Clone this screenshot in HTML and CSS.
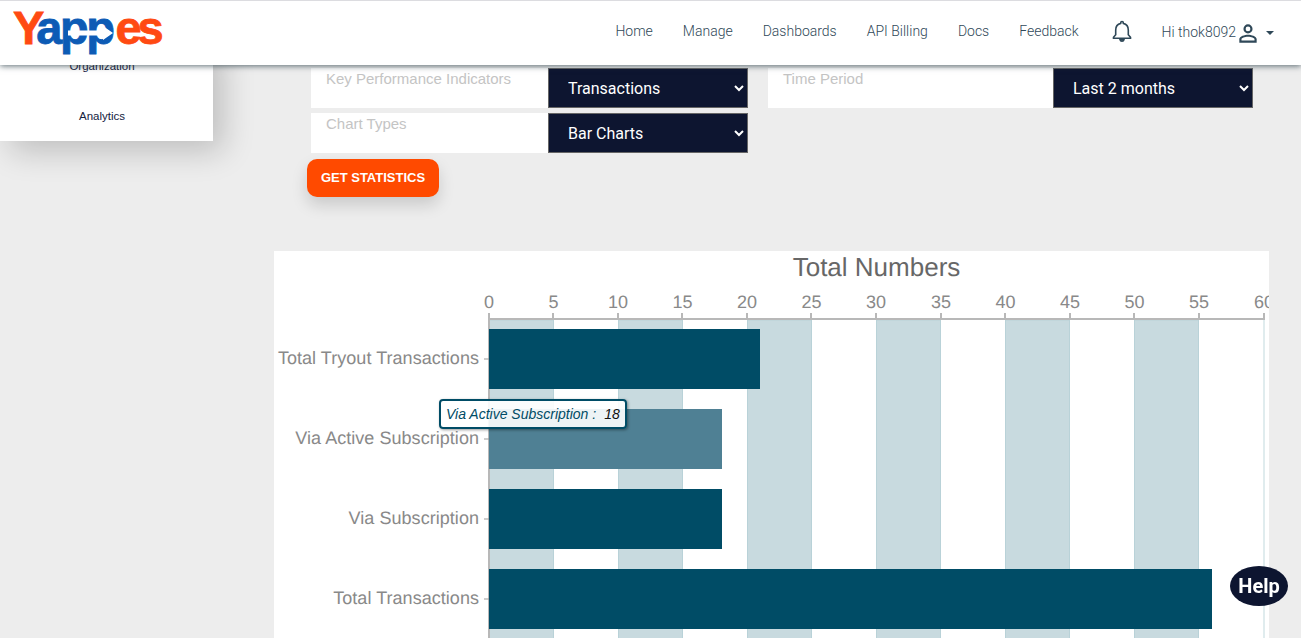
FILE: index.html
```html
<!DOCTYPE html>
<html>
<head>
  <meta charset="UTF-8">
  <title>Yappes - Statistics</title>
  <link rel="stylesheet" href="styles.css">
</head>
<body>
  <div class="header">
    <svg class="logo" width="155" height="64" viewBox="0 0 155 64">
      <text x="0" y="43"><tspan class="logo-red">Y</tspan><tspan class="logo-blue" dx="-8">app</tspan><tspan class="logo-red logo-end" dx="3">es</tspan></text>
      <path class="logo-arrow" d="M55 29.500h35V25l10 7-10 7v-4.500H55z"/>
    </svg>
    <div class="nav">
      <a>Home</a>
      <a>Manage</a>
      <a>Dashboards</a>
      <a>API Billing</a>
      <a>Docs</a>
      <a>Feedback</a>
    </div>
    <svg class="bell" width="24" height="24" viewBox="0 0 24 24">
      <path d="M12 2.500c-.8 0-1.300.6-1.300 1.300v.6C7.600 5.100 5.700 7.800 5.700 11v4.800L3.500 18.300v1h17v-1l-2.200-2.500V11c0-3.200-1.900-5.900-5-6.600v-.6c0-.7-.5-1.300-1.300-1.300z"/>
      <path d="M10 20.500c.2 1 1 1.700 2 1.700s1.800-.7 2-1.700z"/>
    </svg>
    <div class="user">
      <span class="user-name">Hi thok8092</span>
      <svg width="26" height="26" viewBox="0 0 24 24">
        <path d="M12 6a2.200 2.200 0 1 1 0 4.400A2.200 2.200 0 0 1 12 6m0 9.500c3 0 6 1.400 6 2.100V19H6v-1.400c0-.7 3-2.100 6-2.100M12 4a4.200 4.200 0 1 0 0 8.400A4.200 4.200 0 0 0 12 4zm0 9.500c-2.800 0-8 1.400-8 4.100V21h16v-3.400c0-2.700-5.200-4.100-8-4.100z"/>
      </svg>
      <span class="caret"></span>
    </div>
  </div>

  <div class="main">
    <div class="sidebar">
      <div class="side-item">Organization</div>
      <div class="side-item">Analytics</div>
    </div>

    <div class="content">
      <div class="filters">
        <div class="filter">
          <label>Key Performance Indicators</label>
          <select><option>Transactions</option></select>
        </div>
        <div class="filter">
          <label>Time Period</label>
          <select><option>Last 2 months</option></select>
        </div>
        <div class="filter">
          <label>Chart Types</label>
          <select><option>Bar Charts</option></select>
        </div>
      </div>
      <button class="btn-stats">GET STATISTICS</button>

      <div class="chart-card">
        <svg class="chart" width="995" height="387" viewBox="274 251 995 387">
          <text class="chart-title" x="876.500" y="276">Total Numbers</text>

          <rect class="band" x="489.500" y="320" width="64" height="320"/>
          <rect class="band" x="618.500" y="320" width="64" height="320"/>
          <rect class="band" x="747.500" y="320" width="64" height="320"/>
          <rect class="band" x="876.500" y="320" width="64" height="320"/>
          <rect class="band" x="1005.500" y="320" width="64" height="320"/>
          <rect class="band" x="1134.500" y="320" width="64" height="320"/>
          <line class="end-line" x1="1264" y1="320" x2="1264" y2="638"/>

          <path class="axis" d="M488 319H1265M489 313V638M553 313V319M618 313V319M682 313V319M747 313V319M811 313V319M876 313V319M941 313V319M1005 313V319M1070 313V319M1134 313V319M1199 313V319M1264 313V319"/>

          <text class="tick" x="489" y="308">0</text>
          <text class="tick" x="553.500" y="308">5</text>
          <text class="tick" x="618" y="308">10</text>
          <text class="tick" x="682.500" y="308">15</text>
          <text class="tick" x="747" y="308">20</text>
          <text class="tick" x="811.500" y="308">25</text>
          <text class="tick" x="876" y="308">30</text>
          <text class="tick" x="941" y="308">35</text>
          <text class="tick" x="1005.500" y="308">40</text>
          <text class="tick" x="1070" y="308">45</text>
          <text class="tick" x="1134.500" y="308">50</text>
          <text class="tick" x="1199" y="308">55</text>
          <text class="tick" x="1264" y="308">60</text>

          <rect class="bar" x="489" y="329" width="271" height="60"/>
          <rect class="bar bar-hover" x="489" y="409" width="233" height="60"/>
          <rect class="bar" x="489" y="489" width="233" height="60"/>
          <rect class="bar" x="489" y="569" width="723" height="60"/>

          <path class="cat-tick" d="M484 359H489M484 439H489M484 519H489M484 599H489"/>
          <text class="cat" x="479" y="364">Total Tryout Transactions</text>
          <text class="cat" x="479" y="444">Via Active Subscription</text>
          <text class="cat" x="479" y="524">Via Subscription</text>
          <text class="cat" x="479" y="604">Total Transactions</text>
        </svg>
        <div class="tooltip"><em>Via Active Subscription :</em><b>18</b></div>
      </div>
    </div>
  </div>

  <div class="help">Help</div>
</body>
</html>
```

FILE: styles.css
```css
body {
  margin: 0;
  padding: 0;
  height: 638px;
  overflow: hidden;
  background-color: #ededed;
  font-family: Roboto, sans-serif;
}

/* header */
.header {
  position: relative;
  z-index: 10;
  box-sizing: border-box;
  display: flex;
  align-items: center;
  height: 65px;
  padding: 0 27px 0 13px;
  background-color: #fff;
  border-top: 1px solid #dcdce0;
  box-shadow: 0 1px 6px rgba(40, 60, 70, 0.75);
}
.logo {
  flex: none;
}
.logo text {
  font-family: "Liberation Sans", sans-serif;
  font-size: 47px;
  font-weight: bold;
  stroke-width: 0.8;
}
.logo-red {
  fill: #ff4a12;
  stroke: #ff4a12;
}
.logo-blue {
  fill: #0d5bb5;
  stroke: #0d5bb5;
  letter-spacing: -2.500px;
}
.logo-end {
  letter-spacing: -4px;
}
.logo-arrow {
  fill: #fff;
}
.nav {
  display: flex;
  gap: 30px;
  margin: -4px 0 0 auto;
  font-size: 14px;
  font-weight: 300;
  color: #2f4858;
}
.bell {
  margin: -4px 0 0 31px;
  fill: none;
  stroke: #2f4858;
  stroke-width: 1.600;
}
.user {
  display: flex;
  align-items: center;
  margin-left: 28px;
  font-size: 14px;
  font-weight: 300;
  color: #2f4858;
}
.user-name {
  margin-bottom: 2px;
}
.user svg {
  margin-left: -1px;
  fill: #2f4858;
}
.caret {
  margin-left: 5px;
  border-top: 4px solid #2f4858;
  border-left: 4px solid transparent;
  border-right: 4px solid transparent;
}

/* page */
.main {
  display: flex;
  align-items: flex-start;
}
.sidebar {
  flex: none;
  width: 213px;
  margin-top: -24px;
  background-color: #fff;
  box-shadow: 10px 10px 30px rgba(0, 0, 0, 0.2);
}
.side-item {
  display: flex;
  align-items: center;
  justify-content: center;
  height: 50px;
  padding-right: 9px;
  box-sizing: border-box;
  font-family: "Liberation Sans", sans-serif;
  font-size: 11.500px;
  color: #14213d;
}
.content {
  flex: 1;
}

/* filters */
.filters {
  display: grid;
  grid-template-columns: 437px 485px;
  gap: 5px 20px;
  margin: 3px 0 0 98px;
}
.filter {
  display: flex;
  justify-content: space-between;
  height: 40px;
  background-color: #fff;
}
.filter label {
  padding: 2px 0 0 15px;
  font-family: "Liberation Sans", sans-serif;
  font-size: 15px;
  color: #c4c4c4;
}
.filter select {
  box-sizing: border-box;
  width: 200px;
  height: 40px;
  padding-left: 15px;
  border: 1px solid #666;
  border-radius: 0;
  background-color: #0d1530;
  color: #fff;
  font-family: Roboto, sans-serif;
  font-size: 16px;
}

.btn-stats {
  display: block;
  width: 132px;
  height: 38px;
  margin: 6px 0 0 94px;
  padding: 0 0 2px;
  border: 0;
  border-radius: 10px;
  background-color: #ff4a00;
  color: #fff;
  font-family: "Liberation Sans", sans-serif;
  font-size: 13px;
  font-weight: bold;
  box-shadow: 0 8px 16px rgba(0, 0, 0, 0.15);
}

/* chart */
.chart-card {
  position: relative;
  width: 995px;
  height: 387px;
  margin: 54px 0 0 61px;
  background-color: #fff;
  overflow: hidden;
}
.chart {
  display: block;
}
.chart text {
  font-family: "Liberation Sans", sans-serif;
  text-rendering: geometricPrecision;
  opacity: 0.99;
}
.chart-title {
  font-size: 26px;
  fill: #666;
  text-anchor: middle;
}
.tick {
  font-size: 18px;
  fill: #888;
  text-anchor: middle;
}
.cat {
  font-size: 18px;
  letter-spacing: 0.040px;
  fill: #888;
  text-anchor: end;
}
.band {
  fill: #c8dadf;
  stroke: #b9d2d8;
  stroke-width: 1;
}
.end-line {
  stroke: #e0ecee;
  stroke-width: 2;
}
.axis {
  fill: none;
  stroke: #b8b8b8;
  stroke-width: 2;
}
.cat-tick {
  fill: none;
  stroke: #999;
  stroke-width: 1;
}
.bar {
  fill: #004c66;
}
.bar-hover {
  fill: #4f8094;
}
.tooltip {
  position: absolute;
  left: 165px;
  top: 148px;
  box-sizing: border-box;
  display: flex;
  align-items: center;
  gap: 8px;
  width: 188px;
  height: 30px;
  padding-left: 5px;
  border: 2px solid #004c66;
  border-radius: 4px;
  background-color: rgba(255, 255, 255, 0.9);
  box-shadow: 1px 1px 3px rgba(0, 0, 0, 0.4);
  font-family: "Liberation Sans", sans-serif;
  font-size: 14px;
  font-style: italic;
  color: #004c66;
}
.tooltip b {
  font-weight: normal;
  color: #111;
}

.help {
  position: fixed;
  left: 1230px;
  top: 566px;
  width: 58px;
  height: 40px;
  border-radius: 50%;
  background-color: #0d1530;
  color: #fff;
  font-size: 20px;
  font-weight: bold;
  line-height: 40px;
  text-align: center;
}
```
